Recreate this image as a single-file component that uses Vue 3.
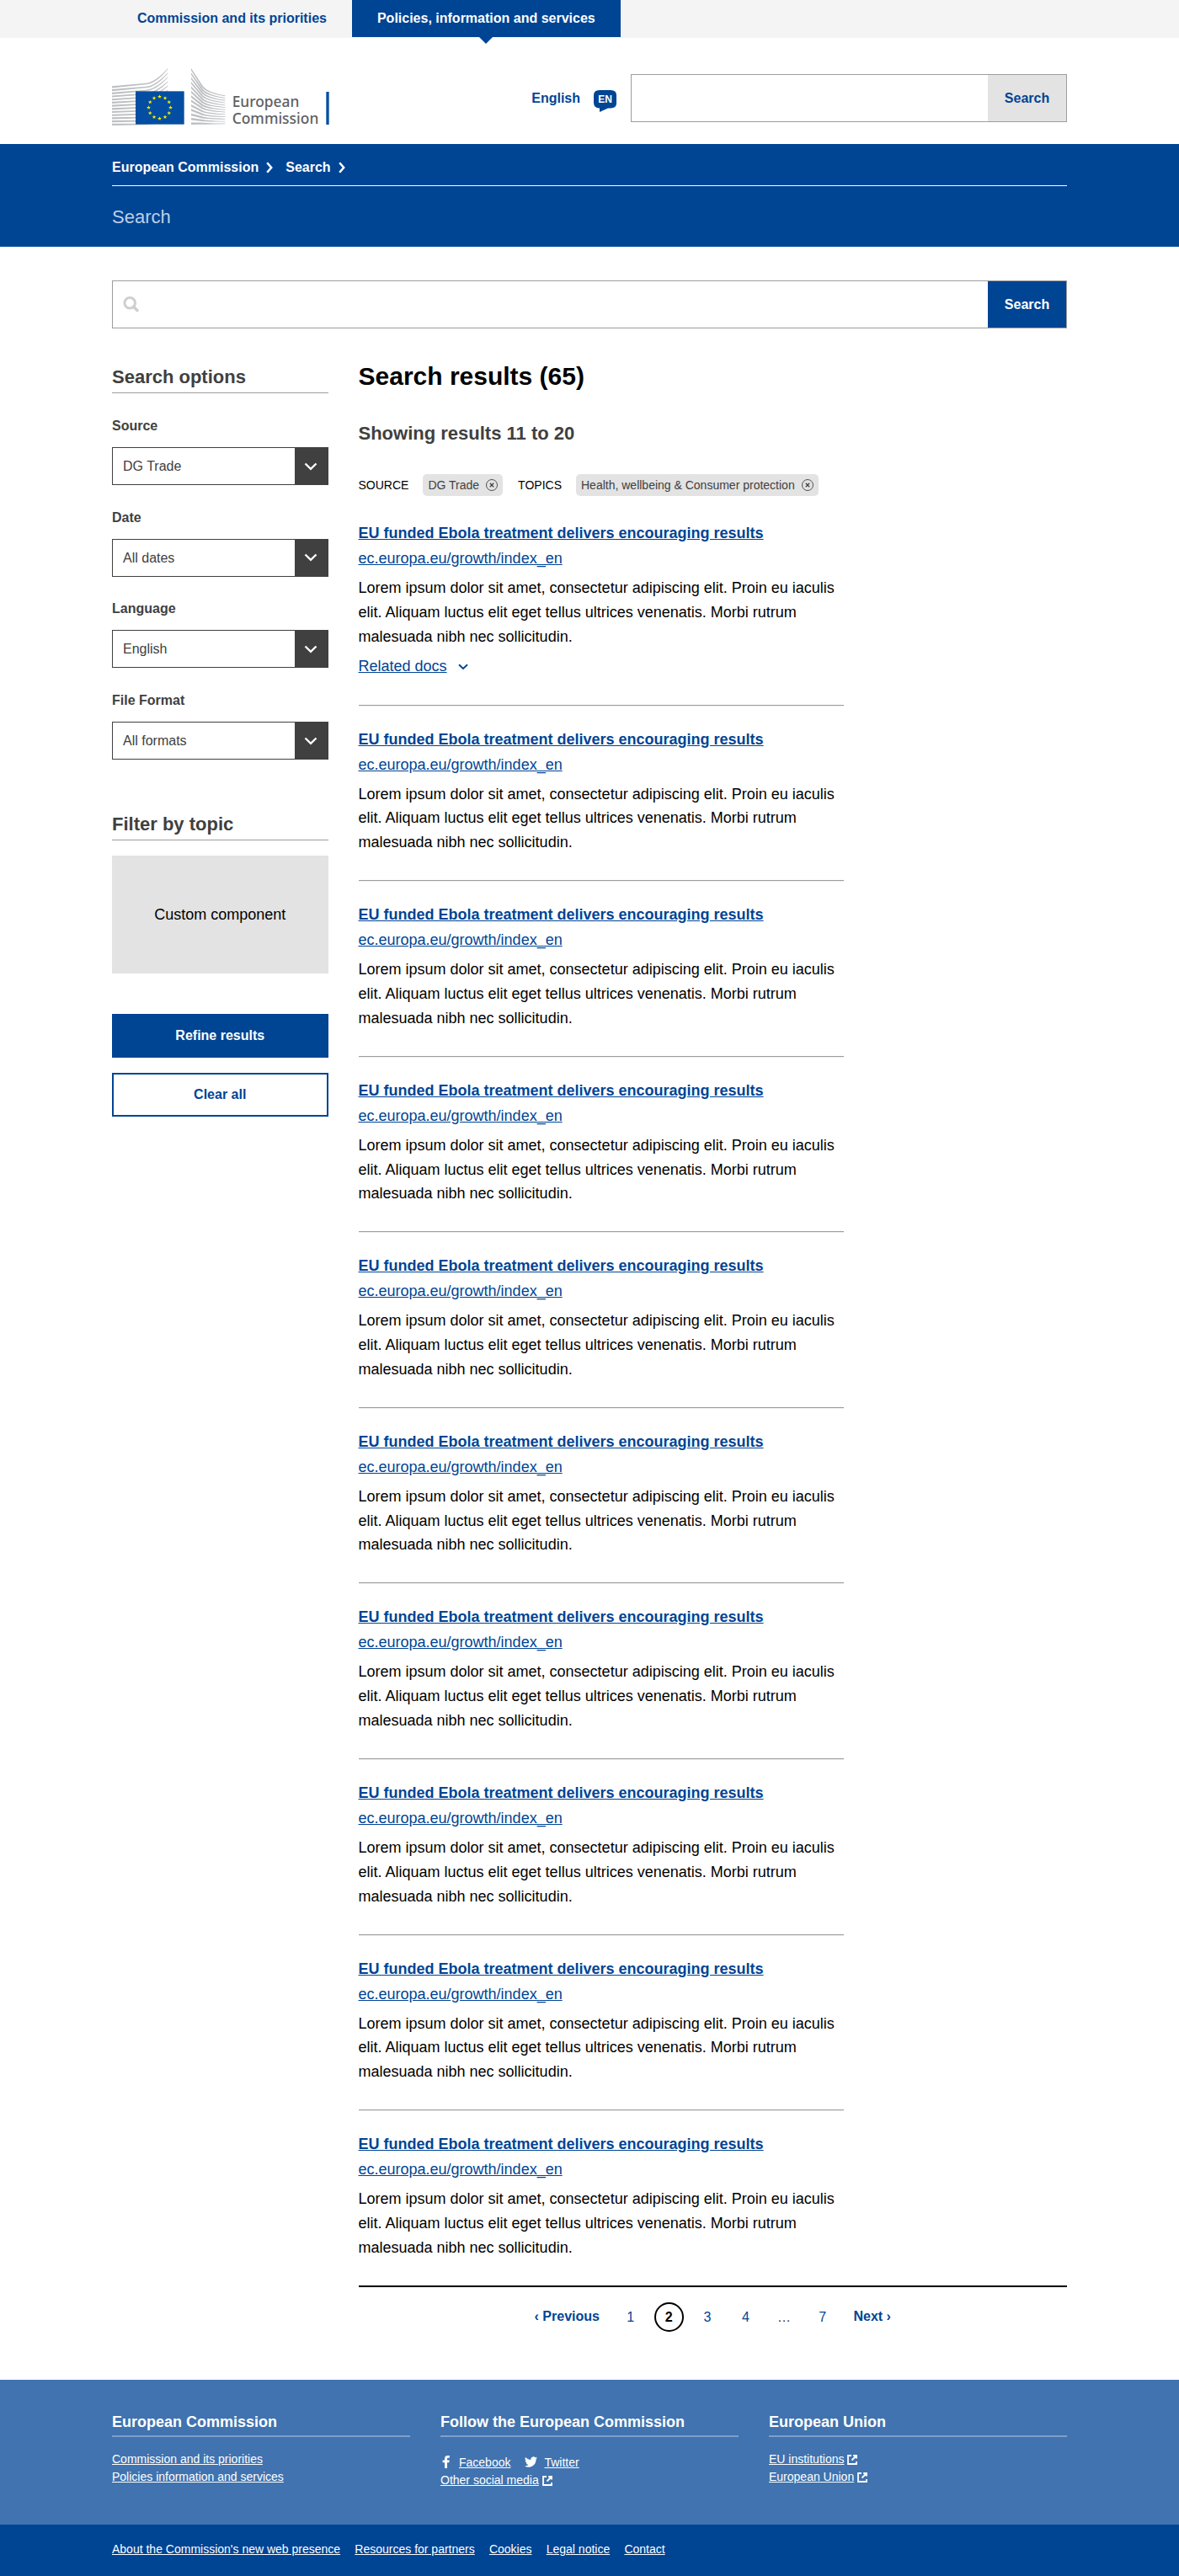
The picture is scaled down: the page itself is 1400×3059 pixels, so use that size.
<script setup>
const filters = [
  { label: 'Source', value: 'DG Trade' },
  { label: 'Date', value: 'All dates' },
  { label: 'Language', value: 'English' },
  { label: 'File Format', value: 'All formats' },
]

const tags = [
  { label: 'SOURCE', value: 'DG Trade' },
  { label: 'TOPICS', value: 'Health, wellbeing & Consumer protection' },
]

const results = Array.from({ length: 10 }, (_, i) => ({
  id: i,
  title: 'EU funded Ebola treatment delivers encouraging results',
  url: 'ec.europa.eu/growth/index_en',
  text: 'Lorem ipsum dolor sit amet, consectetur adipiscing elit. Proin eu iaculis elit. Aliquam luctus elit eget tellus ultrices venenatis. Morbi rutrum malesuada nibh nec sollicitudin.',
  related: i === 0,
}))

const pages = ['1', '2', '3', '4', '…', '7']

const legal = [
  "About the Commission's new web presence",
  'Resources for partners',
  'Cookies',
  'Legal notice',
  'Contact',
]

// Tapered strokes of the Berlaymont facade, left and right of the flag
const leftLines = Array.from({ length: 13 }, (_, i) => {
  const a = 97 + i * 11.1
  const b = 86 + i * 12
  const c = 33 + i * 15.4
  return `M39 ${a} L160 ${b} Q192 ${b - 2} 238 ${c} V${c + 3} Q196 ${b + 2} 160 ${b + 5} L39 ${a + 6.5}Z`
})

const rightLines = Array.from({ length: 13 }, (_, i) => {
  const a = 33 + i * 16.1
  const b = 98 + i * 10.9
  const c = 130 + i * 8.3
  const m = b + (c - b) * 0.65
  return `M321 ${a} L358 ${b - 8 + i * 0.5} Q372 ${m} 442 ${c} V${c + 2.5} Q366 ${m + 4} 352 ${a + (b - a) * 0.8 + 5} L321 ${a + 7.5}Z`
})

const stars = Array.from({ length: 12 }, (_, i) => {
  const t = (i * Math.PI) / 6
  const cx = 208.5 + 39 * Math.sin(t)
  const cy = 173.5 - 39 * Math.cos(t)
  return Array.from({ length: 10 }, (_, k) => {
    const r = k % 2 ? 3 : 7.5
    const u = (k * Math.PI) / 5
    return `${(cx + r * Math.sin(u)).toFixed(2)},${(cy - r * Math.cos(u)).toFixed(2)}`
  }).join(' ')
})
</script>

<template>
  <div class="page">
    <nav class="topbar">
      <div class="wrap tabs">
        <a class="tab">Commission and its priorities</a>
        <a class="tab active">Policies, information and services</a>
      </div>
    </nav>

    <header class="wrap header">
      <svg class="logo" viewBox="39 33 774 201" width="258" height="67">
        <g fill="#bdbfc1">
          <path v-for="(d, i) in leftLines" :key="'l' + i" :d="d" />
          <path v-for="(d, i) in rightLines" :key="'r' + i" :d="d" />
        </g>
        <rect x="123" y="115" width="173" height="118" fill="#034ea2" />
        <polygon v-for="(p, i) in stars" :key="i" :points="p" fill="#fff200" />
        <g class="logo-text">
          <text x="467" y="172" textLength="239" lengthAdjust="spacingAndGlyphs">European</text>
          <text x="467" y="232" textLength="308" lengthAdjust="spacingAndGlyphs">Commission</text>
        </g>
        <rect x="802" y="117" width="10" height="117" fill="#034ea2" />
      </svg>
      <div class="tools">
        <a class="lang">English</a>
        <span class="badge">
          <svg width="27" height="26" viewBox="0 0 27 26"><path d="M7 0H20Q27 0 27 6V16Q27 21 20 21.5H17L7 26V21.5Q0 21 0 15V6Q0 0 7 0Z" fill="#004494" /></svg>
          <b>EN</b>
        </span>
        <div class="site-search">
          <span class="site-btn">Search</span>
        </div>
      </div>
    </header>

    <section class="banner">
      <div class="wrap">
        <div class="crumbs">
          <template v-for="c in ['European Commission', 'Search']" :key="c">
            <a>{{ c }}</a>
            <svg width="8" height="14" viewBox="0 0 8 14"><path d="M1.2 1.2L6.2 7L1.2 12.800" fill="none" stroke="#fff" stroke-width="2.500" /></svg>
          </template>
        </div>
        <div class="banner-title">Search</div>
      </div>
    </section>

    <main class="wrap main">
      <div class="big-search">
        <svg width="19" height="19" viewBox="0 0 19 19"><circle cx="8.200" cy="7.800" r="6.300" fill="none" stroke="#cfcfcf" stroke-width="3" /><path d="M12.500 12.300L17 16.500" stroke="#cfcfcf" stroke-width="3.600" stroke-linecap="round" /></svg>
        <span class="big-btn">Search</span>
      </div>

      <div class="cols">
        <aside class="side">
          <h2 class="side-title">Search options</h2>
          <div v-for="f in filters" :key="f.label" class="field">
            <label>{{ f.label }}</label>
            <div class="select">
              <span>{{ f.value }}</span>
              <i><svg width="16" height="10" viewBox="0 0 16 10"><path d="M1.500 1.500L8 7.800L14.500 1.500" fill="none" stroke="#fff" stroke-width="2.400" /></svg></i>
            </div>
          </div>
          <h2 class="side-title topic">Filter by topic</h2>
          <div class="custom">Custom component</div>
          <a class="btn primary">Refine results</a>
          <a class="btn outline">Clear all</a>
        </aside>

        <div class="content">
          <h1>Search results (65)</h1>
          <h2 class="showing">Showing results 11 to 20</h2>
          <div class="tags">
            <div v-for="t in tags" :key="t.label" class="tag-group">
              <span class="tag-label">{{ t.label }}</span>
              <span class="tag">
                {{ t.value }}
                <svg width="14" height="14" viewBox="0 0 14 14" fill="none" stroke="#404040"><circle cx="7" cy="7" r="6.500" stroke-width="0.900" /><path d="M4.800 4.800L9.200 9.200M9.200 4.800L4.800 9.200" stroke-width="1.300" /></svg>
              </span>
            </div>
          </div>

          <ul class="results">
            <li v-for="r in results" :key="r.id">
              <a class="r-title">{{ r.title }}</a>
              <a class="r-url">{{ r.url }}</a>
              <p>{{ r.text }}</p>
              <div v-if="r.related" class="related">
                <a>Related docs</a>
                <svg width="12" height="8" viewBox="0 0 12 8"><path d="M1 1.200L6 6L11 1.200" fill="none" stroke="#004494" stroke-width="1.900" /></svg>
              </div>
            </li>
          </ul>

          <div class="pager">
            <a class="step prev">‹ Previous</a>
            <span v-for="p in pages" :key="p" class="pg" :class="{ current: p === '2', gap: p === '…' }">{{ p }}</span>
            <a class="step next">Next ›</a>
          </div>
        </div>
      </div>
    </main>

    <footer>
      <div class="foot-top">
        <div class="wrap foot-cols">
          <section>
            <h3>European Commission</h3>
            <div class="row"><a>Commission and its priorities</a></div>
            <div class="row"><a>Policies information and services</a></div>
          </section>
          <section>
            <h3>Follow the European Commission</h3>
            <div class="row social">
              <svg class="fb" width="14" height="15" viewBox="0 0 14 15"><path d="M5 15V8.300H2.600V5.400H5V3.600C5 1.200 6.300 0 8.500 0H10.800V2.700H9.300C8.300 2.700 8 3.100 8 3.900V5.400H10.700L10.300 8.300H8V15Z" fill="#fff" /></svg>
              <a>Facebook</a>
              <svg class="tw" width="15" height="13" viewBox="0 0 16 13"><path d="M16 1.500a6.500 6.500 0 0 1-1.900.5A3.300 3.300 0 0 0 15.600.2a6.600 6.600 0 0 1-2.100.8A3.300 3.300 0 0 0 7.900 4 9.300 9.300 0 0 1 1.100.6a3.300 3.300 0 0 0 1 4.400 3.300 3.300 0 0 1-1.500-.4 3.300 3.300 0 0 0 2.600 3.200 3.300 3.300 0 0 1-1.500.1 3.300 3.300 0 0 0 3.100 2.200A6.600 6.600 0 0 1 0 11.500 9.300 9.300 0 0 0 14.400 3.200 6.600 6.600 0 0 0 16 1.500z" fill="#fff" /></svg>
              <a>Twitter</a>
            </div>
            <div class="row"><a>Other social media</a><svg class="ext" width="12" height="12" viewBox="0 0 12 12"><path d="M5 1H1V11H11V8M11 4.500V1H7.200M11 1L5.500 6.500" fill="none" stroke="#fff" stroke-width="1.800" /></svg></div>
          </section>
          <section>
            <h3>European Union</h3>
            <div v-for="l in ['EU institutions', 'European Union']" :key="l" class="row">
              <a>{{ l }}</a><svg class="ext" width="12" height="12" viewBox="0 0 12 12"><path d="M5 1H1V11H11V8M11 4.500V1H7.200M11 1L5.500 6.500" fill="none" stroke="#fff" stroke-width="1.800" /></svg>
            </div>
          </section>
        </div>
      </div>
      <div class="foot-bottom">
        <div class="wrap legal">
          <a v-for="l in legal" :key="l">{{ l }}</a>
        </div>
      </div>
    </footer>
  </div>
</template>

<style>
body { background: #fff; }
</style>

<style scoped>
* { box-sizing: border-box; }
.page { width: 1400px; height: 3059px; overflow: hidden; font-family: "Liberation Sans", Arial, sans-serif; font-size: 16px; color: #000; }
.wrap { width: 1134px; margin: 0 auto; }
h1, h2, h3, p, ul { margin: 0; padding: 0; }
svg { display: block; flex: none; }

.topbar { height: 45px; background: #f4f4f4; }
.tabs { display: flex; }
.tab { height: 44px; padding: 0 30px; line-height: 43px; font-weight: 700; color: #004494; white-space: nowrap; }
.tab.active { position: relative; background: #004494; color: #fff; }
.tab.active::after { content: ""; position: absolute; top: 44px; left: 50%; margin-left: -8px; border: 8px solid transparent; border-top-color: #004494; border-bottom: 0; }

.header { height: 126px; display: flex; justify-content: space-between; }
.logo { margin-top: 36px; overflow: visible; }
.logo-text { font: 500 52px "Noto Sans", sans-serif; fill: #606163; }
.tools { display: flex; margin-top: 43px; }
.lang { line-height: 57px; font-weight: 700; color: #004494; }
.badge { position: relative; width: 27px; height: 26px; margin: 19px 17px 0 16px; }
.badge b { position: absolute; inset: 0 0 auto 0; text-align: center; font-size: 12px; line-height: 22px; color: #fff; }
.site-search { width: 518px; height: 57px; border: 1px solid #9d9d9d; display: flex; justify-content: flex-end; }
.site-btn { width: 93px; background: #e3e3e3; color: #004494; font-weight: 700; text-align: center; line-height: 56px; }

.banner { height: 122px; background: #004494; color: #fff; }
.crumbs { display: flex; align-items: center; height: 50px; padding-top: 6px; border-bottom: 1px solid #fff; font-weight: 700; }
.crumbs svg { margin: 1px 15px 0 9px; }
.banner-title { font-size: 22px; line-height: 26px; padding-top: 24px; color: #bfd0e4; }

.main { height: 2533px; padding-top: 40px; }
.big-search { height: 57px; border: 1px solid #9d9d9d; display: flex; justify-content: space-between; padding-left: 12px; }
.big-search svg { margin-top: 18px; }
.big-btn { width: 93px; background: #004494; color: #fff; font-weight: 700; text-align: center; line-height: 56px; }

.cols { display: flex; gap: 36px; }
.side { width: 256.500px; padding-top: 43px; }
.side-title { font-size: 22px; line-height: 30px; height: 34px; color: #404040; border-bottom: 1px solid #9d9d9d; }
.field { height: 108.700px; color: #404040; }
.field:first-of-type { margin-top: 27px; }
.field label { display: block; font-weight: 700; line-height: 24px; height: 37px; }
.select { display: flex; justify-content: space-between; height: 45px; border: 1px solid #404040; line-height: 43px; padding-left: 12px; }
.select i { width: 39px; background: #404040; display: flex; align-items: center; justify-content: center; }
.topic { margin-top: 35px; }
.custom { height: 140px; margin-top: 18px; padding-top: 1px; background: #e3e3e3; display: flex; align-items: center; justify-content: center; font-size: 18px; }
.btn { display: block; height: 52px; line-height: 52px; text-align: center; font-weight: 700; }
.primary { margin-top: 48px; background: #004494; color: #fff; }
.outline { margin-top: 18px; border: 2px solid #004494; color: #004494; line-height: 48px; }

.content { width: 841.500px; padding-top: 39px; }
h1 { font-size: 30px; line-height: 36px; }
.showing { margin-top: 35px; font-size: 22px; line-height: 30px; color: #404040; }
.tags { display: flex; gap: 18px; margin-top: 33px; font-size: 14px; line-height: 26px; }
.tag-group { display: flex; gap: 17px; }
.tag { display: flex; align-items: center; gap: 8px; height: 26px; padding: 0 6px; border-radius: 5px; background: #e3e3e3; color: #404040; }

.results { list-style: none; margin-top: 29px; }
.results li { width: 576px; font-size: 18px; padding-bottom: 30.200px; border-bottom: 1px solid #9d9d9d; box-shadow: 0 1px 0 #eee; margin-bottom: 25px; }
.results li:last-child { width: auto; border-bottom: 2px solid #000; box-shadow: none; margin-bottom: 0; }
.results li:last-child p { width: 576px; }
.r-title, .r-url { display: block; line-height: 30px; color: #004494; text-decoration: underline; }
.r-title { font-weight: 700; }
.results p { margin-top: 6px; line-height: 28.800px; }
.related { display: flex; align-items: center; line-height: 30px; margin-top: 6px; color: #004494; text-decoration: underline; }
.related svg { margin: 2px 0 0 13px; }

.pager { display: flex; justify-content: center; align-items: center; margin-top: 18px; height: 35px; color: #004494; }
.pg { width: 35px; height: 35px; margin: 0 5.300px; text-align: center; line-height: 36px; }
.pg.current { border: 2px solid #000; border-radius: 50%; line-height: 31px; font-weight: 700; color: #000; }
.pg.gap { color: #404040; }
.step { font-weight: 700; }
.prev { margin-right: 14px; }
.next { margin-left: 14px; }

.foot-top { height: 172px; background: #4073af; color: #fff; font-size: 14px; }
.foot-cols { display: flex; gap: 36px; }
.foot-cols section { flex: 1; padding-top: 36px; }
h3 { font-size: 18px; line-height: 28px; height: 32px; border-bottom: 2px solid #809fca; margin-bottom: 16px; }
.row { display: flex; align-items: center; line-height: 21px; }
.row a, .legal a { text-decoration: underline; }
.ext { margin-left: 4px; }
.social { height: 25px; padding-top: 3px; }
.fb { margin: -2px 8px 0 0; }
.tw { margin: -2px 8px 0 17px; }
.foot-bottom { height: 61px; background: #004494; color: #fff; font-size: 14px; }
.legal { display: flex; gap: 17.200px; line-height: 58px; }
</style>
